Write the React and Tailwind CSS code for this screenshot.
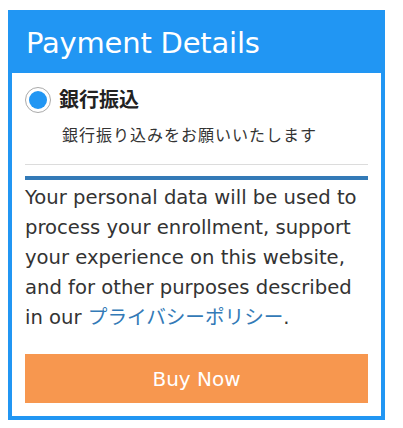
import React from "react";

const App = () => {
    return (
        <div className="min-h-[428px] bg-white pt-[10px] pl-[8px]" style={{ fontFamily: '"DejaVu Sans", "Noto Sans CJK JP", sans-serif' }}>
            <div className="w-[377px] border-4 border-[#2196f3] bg-white">
                {/* header */}
                <div className="h-[59px] bg-[#2196f3] pl-[14px] flex items-center">
                    <h1 className="text-[29px] text-white leading-none font-normal tracking-[-0.2px]">Payment Details</h1>
                </div>

                <div className="px-[13px] pt-[14px] pb-[13px]">
                    {/* radio option */}
                    <label className="flex items-center gap-[8px]">
                        <span className="w-[26px] h-[26px] rounded-full border border-[#aaa] bg-white flex items-center justify-center shrink-0">
                            <span className="w-[18px] h-[18px] rounded-full bg-[#2196f3]" />
                        </span>
                        <span className="text-[20px] font-bold text-[#222] leading-none">銀行振込</span>
                    </label>
                    <p className="ml-[37px] mt-[12px] text-[16px] text-[#333] leading-[22px] tracking-[1px]">
                        銀行振り込みをお願いいたします
                    </p>

                    <div className="mt-[17px] h-px bg-[#dcdcdc]" />
                    <div className="mt-[11px] h-[4px] bg-[#337ab7]" />

                    <p className="mt-[3px] text-[19.6px] leading-[30px] text-[#333]">
                        Your personal data will be used to process your enrollment, support your experience on this website, and for other purposes described in our{" "}
                        <a href="#" className="text-[#337ab7]">プライバシーポリシー</a>.
                    </p>

                    <button className="mt-[21px] w-full h-[49px] bg-[#f7974f] text-white text-[20px]">
                        Buy Now
                    </button>
                </div>
            </div>
        </div>
    );
};

export default App;
